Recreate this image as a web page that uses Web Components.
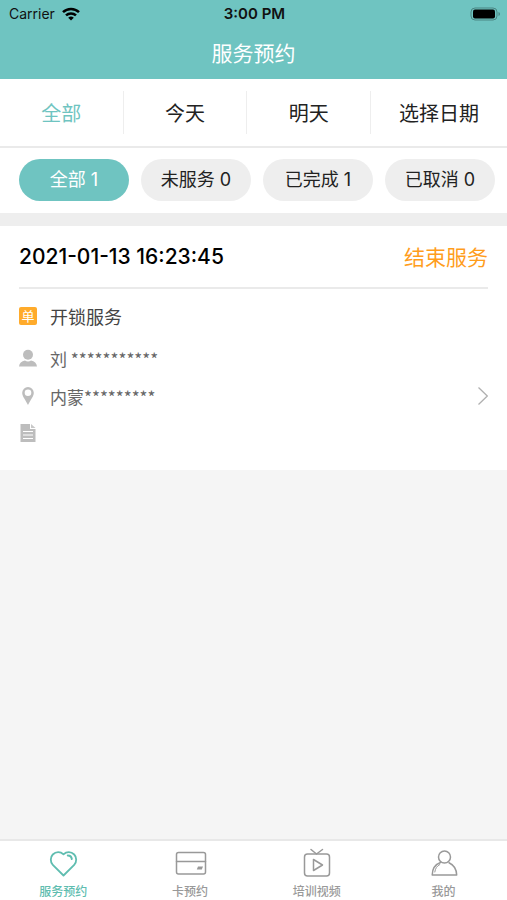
<!DOCTYPE html>
<html lang="zh-CN">
<head>
<meta charset="UTF-8">
<meta name="viewport" content="width=device-width, initial-scale=1">
<title>服务预约</title>
<style>
    html {
        --teal: #6fc4c1;
        --line: #eaeaea;
        --latin: Inter, "Noto Sans CJK SC", sans-serif;
        --cjk: "Noto Sans CJK SC", sans-serif;
    }
    body {
        margin: 0;
        background: #f5f5f5;
        color: #222;
        font-family: var(--cjk);
    }
</style>
</head>
<body>
<booking-app></booking-app>

<script>
/**
 * Base element: renders template() into an open shadow root
 */
class BaseElement extends HTMLElement {
    constructor() {
        super();
        this.attachShadow({ mode: 'open' });
    }

    connectedCallback() {
        this.shadowRoot.innerHTML = this.template();
    }
}

class StatusBar extends BaseElement {
    template() {
        return `
            <style>
                :host {
                    display: grid;
                    grid-template-columns: 1fr auto 1fr;
                    align-items: center;
                    height: 27px;
                    padding: 0 7px 0 9px;
                    color: #111;
                    font: 14px/20px var(--latin);
                }
                .carrier {
                    display: flex;
                    align-items: center;
                    gap: 7px;
                }
                .time {
                    font-size: 15px;
                    font-weight: 600;
                }
                .battery { justify-self: end; }
                svg { display: block; }
            </style>
            <div class="carrier">
                <span>Carrier</span>
                <svg width="18" height="14" viewBox="0 0 18 14" fill="none" stroke="#000" stroke-width="2.5">
                    <path d="M1 5.2a11.4 11.4 0 0 1 16 0M4 8.4a7.2 7.2 0 0 1 10 0"/>
                    <path d="M9 13.6L6.2 10.8a4 4 0 0 1 5.6 0z" fill="#000" stroke="none"/>
                </svg>
            </div>
            <span class="time">3:00 PM</span>
            <svg class="battery" width="30" height="14" viewBox="0 0 30 14">
                <rect x="1" y="1" width="26" height="12" rx="4" fill="none" stroke="#4b8583"/>
                <rect x="3" y="2.5" width="22" height="9" rx="2"/>
                <path d="M28.5 5v4q1.5-.6 1.5-2t-1.5-2z" fill="#4b8583"/>
            </svg>
        `;
    }
}

class NavTitle extends BaseElement {
    template() {
        return `
            <style>
                :host { display: block; }
                h1 {
                    margin: 0;
                    height: 52px;
                    color: white;
                    font-size: 21px;
                    font-weight: 400;
                    line-height: 50px;
                    text-align: center;
                }
            </style>
            <h1><slot></slot></h1>
        `;
    }
}

class DateTabs extends BaseElement {
    template() {
        const tabs = ['全部', '今天', '明天', '选择日期'];
        return `
            <style>
                :host {
                    display: grid;
                    grid-template-columns: 10fr 10fr 10fr 11fr;
                    padding: 12px 0;
                    background: white;
                    border-bottom: 2px solid var(--line);
                }
                button {
                    height: 43px;
                    padding: 0;
                    border: 0;
                    border-right: 1px solid #eee;
                    background: none;
                    color: inherit;
                    font: 20px/43px var(--cjk);
                }
                button:last-child { border-right: 0; }
                button.active { color: var(--teal); }
            </style>
            ${tabs.map((t, i) => `<button type="button" class="${i === 0 ? 'active' : ''}">${t}</button>`).join('')}
        `;
    }
}

class StatusFilter extends BaseElement {
    template() {
        const filters = [['全部', 1], ['未服务', 0], ['已完成', 1], ['已取消', 0]];
        return `
            <style>
                :host {
                    display: grid;
                    grid-template-columns: repeat(4, 1fr);
                    gap: 12px;
                    padding: 11px 12px 12px 19px;
                    background: white;
                    border-bottom: 13px solid #eee;
                }
                button {
                    height: 42px;
                    padding: 0;
                    border: 0;
                    border-radius: 21px;
                    background: #eee;
                    color: inherit;
                    font: 18px/42px var(--latin);
                }
                button.active {
                    background: var(--teal);
                    color: white;
                }
            </style>
            ${filters.map(([name, count], i) => `<button type="button" class="${i === 0 ? 'active' : ''}">${name} ${count}</button>`).join('')}
        `;
    }
}

class OrderCard extends BaseElement {
    template() {
        return `
            <style>
                :host {
                    display: block;
                    padding: 0 19px 19px;
                    background: white;
                }
                header {
                    display: flex;
                    align-items: center;
                    justify-content: space-between;
                    height: 61px;
                    border-bottom: 2px solid var(--line);
                }
                time {
                    color: #000;
                    font: 500 21px/28px var(--latin);
                }
                .finish {
                    padding: 0 0 2px;
                    border: 0;
                    background: none;
                    color: #ff9d1c;
                    font: 21px/28px var(--cjk);
                }
                ::slotted(order-row:first-of-type) { margin-top: 4px; }
            </style>
            <header>
                <time><slot name="time"></slot></time>
                <button type="button" class="finish"><slot name="action"></slot></button>
            </header>
            <slot></slot>
        `;
    }
}

const ROW_ICONS = {
    order: '<span class="badge">单</span>',
    person: `
        <svg width="18" height="18" viewBox="0 0 18 18" fill="#bdbdbd">
            <circle cx="9" cy="5.8" r="5"/>
            <path d="M0 17.5c.3-3.500 2.500-5 6-6 1.500 1.200 4.500 1.200 6 0 3.500 1 5.700 2.500 6 6z"/>
        </svg>`,
    pin: `
        <svg width="18" height="18" viewBox="0 0 18 18" fill="#bdbdbd">
            <path fill-rule="evenodd" d="M9 0a5.8 5.8 0 0 0-5.8 5.8C3.2 9.5 6.500 13 9 18c2.500-5 5.800-8.500 5.800-12.200A5.800 5.800 0 0 0 9 0zm0 2.500a3.300 3.300 0 1 1 0 6.600 3.300 3.300 0 0 1 0-6.600z"/>
        </svg>`,
    note: `
        <svg width="18" height="18" viewBox="0 0 18 18">
            <path d="M1.500 0H11v5h5.500v13h-15z" fill="#bdbdbd"/>
            <path d="M12 0l4.500 4H12z" fill="#c8c8c8"/>
            <path d="M4 7.500h10M4 11h10M4 14.500h10" stroke="white"/>
        </svg>`
};

class OrderRow extends BaseElement {
    template() {
        const icon = this.getAttribute('icon');
        return `
            <style>
                :host {
                    display: flex;
                    align-items: center;
                    gap: 13px;
                    height: 38px;
                    color: #666;
                    font-size: 17px;
                }
                :host([icon="order"]) {
                    height: 46px;
                    color: #444;
                    font-size: 18px;
                }
                :host([icon="note"]) { height: 36px; }
                svg { display: block; }
                .icon { width: 18px; }
                .text { flex: 1; }
                .badge {
                    display: block;
                    height: 18px;
                    border-radius: 2px;
                    background: #ffab2b;
                    color: white;
                    font-size: 13px;
                    line-height: 18px;
                    text-align: center;
                }
            </style>
            <span class="icon">${ROW_ICONS[icon]}</span>
            <span class="text"><slot></slot></span>
            ${this.hasAttribute('link') ? `
            <svg width="10" height="18" viewBox="0 0 10 18" fill="none" stroke="#b0b0b0" stroke-width="1.3">
                <path d="M.5.5L9.300 9l-8.800 8.500"/>
            </svg>
            ` : ''}
        `;
    }
}

const TAB_ICONS = {
    heart: `
        <path stroke-width="1.8" d="M15.500 27.500L4.800 16.800C2 14 2.300 9 4.800 6.500 8 3.200 12.500 3.500 15.500 6.300 18.500 3.500 23 3.200 26.200 6.500 28.700 9 29 14 26.200 16.800z"/>
        <path stroke-width="2" d="M19.800 7.500c2.200 0 3.700 1.300 4 3.500"/>`,
    card: `
        <rect x="1.500" y="4.500" width="29" height="21.500" rx="2"/>
        <path d="M1.500 13.500h29"/>
        <path d="M23 18.500h5l-1.200 3h-5z" fill="currentColor" stroke="none"/>`,
    video: `
        <path d="M9 1.500l5.500 4.500L20.500 1.500"/>
        <rect x="2.500" y="6" width="25" height="22" rx="3"/>
        <path d="M11.500 11.500v11l9-5.500z"/>`,
    user: `
        <circle cx="15.500" cy="9" r="6"/>
        <path d="M11.500 14.500C6 16.500 3.300 21 3.200 27h24.500C27.500 21 25 17 20 14.700"/>
        <path stroke-width="1" d="M5.800 24c.5-3.500 2-6 5-7.500"/>`
};

class TabItem extends BaseElement {
    template() {
        return `
            <style>
                :host {
                    display: block;
                    flex: 1;
                    color: #999;
                }
                :host([active]) { color: #5fbdb0; }
                a {
                    display: flex;
                    flex-direction: column;
                    align-items: center;
                    padding-top: 7px;
                    color: inherit;
                    font-size: 12px;
                    font-weight: 500;
                    line-height: 18px;
                    text-decoration: none;
                }
                svg {
                    display: block;
                    margin-bottom: 4px;
                    overflow: visible;
                }
            </style>
            <a href="#${this.getAttribute('icon')}">
                <svg width="30" height="30" viewBox="0 0 30 30" fill="none" stroke="currentColor" stroke-width="1.5" stroke-linejoin="round" stroke-linecap="round">
                    ${TAB_ICONS[this.getAttribute('icon')]}
                </svg>
                <slot></slot>
            </a>
        `;
    }
}

class TabBar extends BaseElement {
    template() {
        return `
            <style>
                :host { display: block; }
                nav {
                    display: flex;
                    height: 59px;
                    border-top: 2px solid #e8e8e8;
                    background: white;
                }
            </style>
            <nav><slot></slot></nav>
        `;
    }
}

class BookingApp extends BaseElement {
    template() {
        return `
            <style>
                :host {
                    display: flex;
                    flex-direction: column;
                    min-height: 100vh;
                }
                .top { background: var(--teal); }
                main { flex: 1; }
            </style>
            <div class="top">
                <status-bar></status-bar>
                <nav-title>服务预约</nav-title>
            </div>
            <date-tabs></date-tabs>
            <status-filter></status-filter>
            <main>
                <order-card>
                    <span slot="time">2021-01-13 16:23:45</span>
                    <span slot="action">结束服务</span>
                    <order-row icon="order">开锁服务</order-row>
                    <order-row icon="person">刘 ***********</order-row>
                    <order-row icon="pin" link>内蒙*********</order-row>
                    <order-row icon="note"></order-row>
                </order-card>
            </main>
            <tab-bar>
                <tab-item icon="heart" active>服务预约</tab-item>
                <tab-item icon="card">卡预约</tab-item>
                <tab-item icon="video">培训视频</tab-item>
                <tab-item icon="user">我的</tab-item>
            </tab-bar>
        `;
    }
}

customElements.define('status-bar', StatusBar);
customElements.define('nav-title', NavTitle);
customElements.define('date-tabs', DateTabs);
customElements.define('status-filter', StatusFilter);
customElements.define('order-card', OrderCard);
customElements.define('order-row', OrderRow);
customElements.define('tab-item', TabItem);
customElements.define('tab-bar', TabBar);
customElements.define('booking-app', BookingApp);
</script>
</body>
</html>
